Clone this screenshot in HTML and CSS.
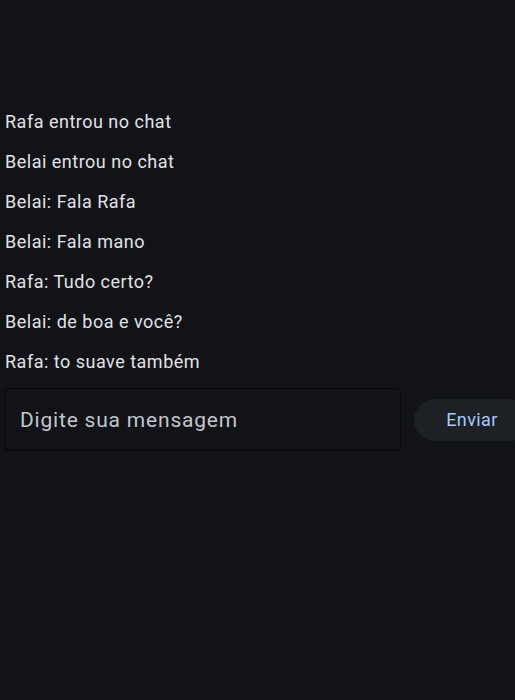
FILE: index.html
```html
<!DOCTYPE html>
<html lang="pt-BR">
<head>
<meta charset="utf-8">
<title>Chat</title>
<link rel="stylesheet" href="styles.css">
</head>
<body>
<main class="chat">
  <ul class="messages">
    <li class="message">Rafa entrou no chat</li>
    <li class="message">Belai entrou no chat</li>
    <li class="message">Belai: Fala Rafa</li>
    <li class="message">Belai: Fala mano</li>
    <li class="message">Rafa: Tudo certo?</li>
    <li class="message">Belai: de boa e você?</li>
    <li class="message">Rafa: to suave também</li>
  </ul>
  <form class="composer">
    <input class="composer-input" type="text" placeholder="Digite sua mensagem">
    <button class="composer-send" type="button">Enviar</button>
  </form>
</main>
</body>
</html>
```
FILE: styles.css
```css
html, body {
  margin: 0;
  padding: 0;
  background: #111318;
  height: 100%;
  overflow: hidden;
}
body {
  font-family: Roboto, "Liberation Sans", sans-serif;
  color: #e2e2e6;
}
.chat {
  padding: 110px 0 0 5px;
}
.messages {
  list-style: none;
  margin: 0;
  padding: 0;
  display: flex;
  flex-direction: column;
  gap: 16px;
}
.message {
  font-size: 18px;
  line-height: 24px;
  letter-spacing: 0.5px;
}
.composer {
  margin: 14px 0 0 -1px;
  display: flex;
  align-items: center;
  gap: 13px;
  width: 560px;
}
.composer-input {
  box-sizing: border-box;
  width: 397px;
  height: 63px;
  flex: none;
  background: #111318;
  border: 1px solid #05070a;
  border-radius: 4px;
  padding: 0 15px;
  font-family: Roboto, "Liberation Sans", sans-serif;
  font-size: 21px;
  letter-spacing: 0.8px;
  color: #e2e2e6;
  outline: none;
}
.composer-input::placeholder {
  color: #c3c6cc;
}
.composer-send {
  flex: none;
  box-sizing: border-box;
  width: 116px;
  height: 42px;
  border: none;
  border-radius: 21px;
  background: #1d2024;
  color: #a8c7fa;
  font-family: Roboto, "Liberation Sans", sans-serif;
  font-size: 18px;
  font-weight: 400;
  letter-spacing: 0.4px;
  padding: 0;
}
```
